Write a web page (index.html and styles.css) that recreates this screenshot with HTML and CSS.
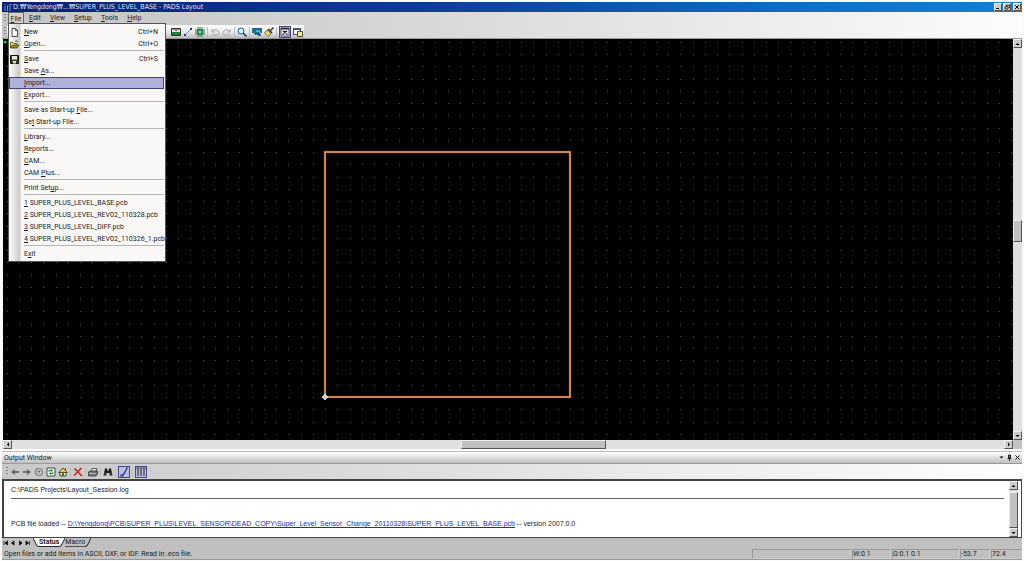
FILE: index.html
```html
<!DOCTYPE html>
<html lang="en">
<head>
<meta charset="utf-8">
<title>PADS Layout</title>
<link rel="stylesheet" href="styles.css">
</head>
<body>
<div class="app">
  <header class="titlebar">
    <svg class="logo" width="8" height="8" viewBox="0 0 8 8"><path d="M1 1v1M1 3v5M3.500 8V2.500h1M6 8V1.500h2" fill="none" stroke="#8c9cd8" stroke-width=".9"/></svg>
    <h1 class="title">D:₩Yengdong₩...₩SUPER_PLUS_LEVEL_BASE - PADS Layout</h1>
    <div class="winbtns">
      <button class="btn3d" aria-label="Minimize"><svg width="6" height="6" viewBox="0 0 6 6"><path d="M1 4.500h3" stroke="#000"/></svg></button>
      <button class="btn3d" aria-label="Restore"><svg width="6" height="6" viewBox="0 0 6 6"><path d="M2.500 2.500V1h3v2.500H4.500M1 2.700h3v2.300H1z" fill="none" stroke="#000" stroke-width=".7"/></svg></button>
      <button class="btn3d close" aria-label="Close"><svg width="6" height="6" viewBox="0 0 6 6"><path d="M1 1l4 4M5 1l-4 4" stroke="#000"/></svg></button>
    </div>
  </header>

  <div class="chrome">
    <nav class="menubar">
      <span class="grip"></span>
      <div class="menuwrap">
        <button class="menubtn open"><u>F</u>ile</button>
        <div class="menu" role="menu">
          <button class="item" role="menuitem"><svg class="mi" width="9" height="9" viewBox="0 0 9 9"><path d="M2 .5h3.500l2 2v6H2z" fill="#fff" stroke="#222" stroke-width=".8"/><path d="M5.500.5v2h2" fill="none" stroke="#222" stroke-width=".7"/></svg><span><u>N</u>ew</span><kbd>Ctrl+N</kbd></button>
          <button class="item" role="menuitem"><svg class="mi" width="9" height="9" viewBox="0 0 9 9"><path d="M.5 8V2.500h2.500l1 1h3V5" fill="#e8df6a" stroke="#554d10" stroke-width=".8"/><path d="M.5 8L2.500 5H9L7 8z" fill="#9a9114" stroke="#333008" stroke-width=".7"/><path d="M5 1.500q1.500-1.500 3 .5" fill="none" stroke="#222" stroke-width=".7"/></svg><span><u>O</u>pen...</span><kbd>Ctrl+O</kbd></button>
          <hr>
          <button class="item" role="menuitem"><svg class="mi" width="9" height="9" viewBox="0 0 9 9"><path d="M.5.5h8v8h-8z" fill="#3d461f" stroke="#151808"/><path d="M2 1h5v3.500H2z" fill="#e8e8e4"/><path d="M3 6h3v2.500H3z" fill="#ddd"/></svg><span><u>S</u>ave</span><kbd>Ctrl+S</kbd></button>
          <button class="item" role="menuitem"><span>Save <u>A</u>s...</span></button>
          <button class="item hot" role="menuitem"><span><u>I</u>mport...</span></button>
          <button class="item" role="menuitem"><span><u>E</u>xport...</span></button>
          <hr>
          <button class="item" role="menuitem"><span>Save as Start-up <u>F</u>ile...</span></button>
          <button class="item" role="menuitem"><span>Se<u>t</u> Start-up File...</span></button>
          <hr>
          <button class="item" role="menuitem"><span><u>L</u>ibrary...</span></button>
          <button class="item" role="menuitem"><span><u>R</u>eports...</span></button>
          <button class="item" role="menuitem"><span><u>C</u>AM...</span></button>
          <button class="item" role="menuitem"><span>CAM <u>P</u>lus...</span></button>
          <hr>
          <button class="item" role="menuitem"><span>Print Set<u>u</u>p...</span></button>
          <hr>
          <button class="item" role="menuitem"><span><u>1</u> SUPER_PLUS_LEVEL_BASE.pcb</span></button>
          <button class="item" role="menuitem"><span><u>2</u> SUPER_PLUS_LEVEL_REV02_110328.pcb</span></button>
          <button class="item" role="menuitem"><span><u>3</u> SUPER_PLUS_LEVEL_DIFF.pcb</span></button>
          <button class="item" role="menuitem"><span><u>4</u> SUPER_PLUS_LEVEL_REV02_110326_1.pcb</span></button>
          <hr>
          <button class="item" role="menuitem"><span>E<u>x</u>it</span></button>
        </div>
      </div>
      <button class="menubtn"><u>E</u>dit</button>
      <button class="menubtn"><u>V</u>iew</button>
      <button class="menubtn"><u>S</u>etup</button>
      <button class="menubtn"><u>T</u>ools</button>
      <button class="menubtn"><u>H</u>elp</button>
    </nav>
    <div class="toolbar">
      <span class="grip"></span>
      <div class="tools">
        <button class="tool" aria-label="Board"><svg width="10" height="10" viewBox="0 0 10 10"><path d="M.5 1.500h9v7h-9z" fill="#e9ece4" stroke="#333"/><path d="M1 5h8v3H1z" fill="#188038"/><path d="M1 1h8v1.500H1z" fill="#333"/><path d="M4 3.500h2" stroke="#d04030"/></svg></button>
        <button class="tool" aria-label="Route"><svg width="10" height="10" viewBox="0 0 10 10"><path d="M2 8l6-6" stroke="#6c86e6"/><path d="M1 7h2v2H1zM7 1h2v2H7z" fill="#1230c8"/></svg></button>
        <button class="tool" aria-label="Component"><svg width="10" height="10" viewBox="0 0 10 10"><path d="M3 0v10M5 0v10M7 0v10M0 3h10M0 5h10M0 7h10" stroke="#285a3c" stroke-width=".9"/><path d="M2 2h6v6H2z" fill="#2e8b57"/><path d="M4 4h2v2H4z" fill="#a8dcb8"/></svg></button>
        <span class="sep"></span>
        <button class="tool" aria-label="Undo"><svg width="10" height="10" viewBox="0 0 10 10"><path d="M2 2v3h3M2 5q3-4 6-1t-1 4H2" fill="none" stroke="#a5a5a5"/></svg></button>
        <button class="tool" aria-label="Redo"><svg width="10" height="10" viewBox="0 0 10 10"><path d="M8 2v3H5M8 5Q5 1 2 4t1 4h5" fill="none" stroke="#a5a5a5"/></svg></button>
        <span class="sep"></span>
        <button class="tool" aria-label="Zoom"><svg width="10" height="10" viewBox="0 0 10 10"><circle cx="4" cy="4" r="3" fill="#d7f2f5" stroke="#20588c"/><path d="M6 6l3.500 3.500" stroke="#183c88" stroke-width="1.600"/></svg></button>
        <span class="sep"></span>
        <button class="tool" aria-label="View board"><svg width="10" height="10" viewBox="0 0 10 10"><path d="M0 1h10v5H0z" fill="#157884"/><path d="M1 1h8v1H1z" fill="#2856a8"/><path d="M2 6h6l1 3H7L5 7.500 3 8z" fill="#1b4a90"/><path d="M4 4h3l1 2" fill="none" stroke="#a5dce8"/></svg></button>
        <button class="tool" aria-label="Redraw"><svg width="10" height="10" viewBox="0 0 10 10"><path d="M6 3l3-3 1 1-3 3z" fill="#333"/><path d="M3 3l4 4-3 2.500L.5 6z" fill="#e8dd70" stroke="#605a20" stroke-width=".8"/><path d="M4 2l4 4" stroke="#222" stroke-width="1.400"/></svg></button>
        <span class="sep"></span>
        <button class="tool on" aria-label="Output window"><svg width="10" height="10" viewBox="0 0 10 10"><path d="M1 1h8v8H1z" fill="#dddcec" stroke="#444" stroke-width=".8"/><path d="M1 1h8v1.500H1z" fill="#333"/><path d="M3 4.500h4M6 4L2.500 8M5 5.500L7.500 8" fill="none" stroke="#111"/></svg></button>
        <button class="tool" aria-label="Project explorer"><svg width="10" height="10" viewBox="0 0 10 10"><path d="M.5 1.500h7v6h-7z" fill="#fff" stroke="#45506c"/><path d="M0 1h8v2H0z" fill="#455484"/><path d="M4.500 4.500h5v5h-5z" fill="#f0e7a0" stroke="#55502c"/></svg></button>
      </div>
    </div>
  </div>

  <main class="workspace">
    <svg class="board" role="img" aria-label="Board outline">
      <defs>
        <pattern id="grid" x="28" y="15" width="49" height="49" patternUnits="userSpaceOnUse">
          <path d="M0 0h1v1H0zM12 0h1v1h-1zM25 0h1v1h-1zM37 0h1v1h-1zM0 12h1v1H0zM12 12h1v1h-1zM25 12h1v1h-1zM37 12h1v1h-1zM0 25h1v1H0zM12 25h1v1h-1zM25 25h1v1h-1zM37 25h1v1h-1zM0 37h1v1H0zM12 37h1v1h-1zM25 37h1v1h-1zM37 37h1v1h-1z" fill="#4c4c4c"/>
        </pattern>
      </defs>
      <rect width="100%" height="100%" fill="#000"/>
      <rect width="100%" height="100%" fill="url(#grid)"/>
      <rect x="322" y="113" width="245" height="245" fill="none" stroke="#74401c" stroke-width="2.400"/>
      <rect x="322" y="113" width="245" height="245" fill="none" stroke="#f2a368" stroke-width="1.400"/>
      <path d="M322 355l1 2 2 1-2 1-1 2-1-2-2-1 2-1z" fill="#fff" stroke="#dfe8ee"/><path d="M320 356l4 4M324 356l-4 4" stroke="#9cb4c4" stroke-width=".8"/>
      <circle cx="2" cy="3" r="1.500" fill="#18d818"/>
    </svg>
    <div class="vscroll">
      <button class="btn3d arrow" aria-label="Up"><svg width="5" height="4" viewBox="0 0 5 4"><path d="M.5 3h4L2.500 1z"/></svg></button>
      <span class="track"></span><span class="thumb board-thumb"></span><span class="track"></span>
      <button class="btn3d arrow" aria-label="Down"><svg width="5" height="4" viewBox="0 0 5 4"><path d="M.5 1h4l-2 2z"/></svg></button>
    </div>
  </main>
  <div class="hscroll">
    <button class="btn3d arrow" aria-label="Left"><svg width="4" height="5" viewBox="0 0 4 5"><path d="M3 .5v4l-2-2z"/></svg></button>
    <span class="left-track"></span><span class="thumb"></span><span class="right-track"></span>
    <button class="btn3d arrow" aria-label="Right"><svg width="4" height="5" viewBox="0 0 4 5"><path d="M1 .5v4l2-2z"/></svg></button>
    <span class="corner"></span>
  </div>

  <section class="output">
    <div class="outhead">
      <h2>Output Window</h2>
      <button class="mini" aria-label="Options"><svg width="7" height="7" viewBox="0 0 7 7"><path d="M1.500 2.500h4l-2 2z"/></svg></button>
      <button class="mini" aria-label="Pin"><svg width="7" height="7" viewBox="0 0 7 7"><path d="M2.500 1h2v3h-2zM1.500 4.500h4M3.500 5v2" fill="#777" stroke="#000" stroke-width=".8"/></svg></button>
      <button class="mini" aria-label="Close output"><svg width="7" height="7" viewBox="0 0 7 7"><path d="M1.500 1.500l4 4M5.500 1.500l-4 4" stroke="#000"/></svg></button>
    </div>
    <div class="outtools">
      <span class="grip"></span>
      <button class="tool" aria-label="Back"><svg width="10" height="10" viewBox="0 0 10 10"><path d="M9 5H3" stroke="#666" stroke-width="1.800"/><path d="M1 5l4-3v6z" fill="#666"/></svg></button>
      <button class="tool" aria-label="Forward"><svg width="10" height="10" viewBox="0 0 10 10"><path d="M1 5h6" stroke="#666" stroke-width="1.800"/><path d="M9 5L5 2v6z" fill="#666"/></svg></button>
      <button class="tool" aria-label="Stop"><svg width="10" height="10" viewBox="0 0 10 10"><circle cx="5" cy="5" r="3.500" fill="#ddd" stroke="#777" stroke-width="1.200"/><path d="M3.500 3.500l3 3M6.500 3.500l-3 3" stroke="#666" stroke-width="1.200"/></svg></button>
      <button class="tool" aria-label="Refresh"><svg width="10" height="10" viewBox="0 0 10 10"><path d="M1 1h8v8H1z" fill="#f6fff6" stroke="#3e4c3e"/><path d="M3 5V3.500h3.500M7 5v1.500H3.500" fill="none" stroke="#159035"/><path d="M5 2l2 1.500L5 5zM5 5L3 6.500 5 8z" fill="#159035"/></svg></button>
      <button class="tool" aria-label="Home"><svg width="10" height="10" viewBox="0 0 10 10"><path d="M2 5h6v4H2z" fill="#fff6be" stroke="#444"/><path d="M.5 5.500L5 1l4.500 4.500z" fill="#d9c554" stroke="#494014" stroke-width=".8"/><path d="M7 1h1v2H7z" fill="#b22"/><path d="M4 6h2v3H4z" fill="#456f38"/></svg></button>
      <span class="sep"></span>
      <button class="tool" aria-label="Delete"><svg width="10" height="10" viewBox="0 0 10 10"><path d="M1.500 1.500L9 9M8.500 1L1 8.500" stroke="#c32a24" stroke-width="1.700"/></svg></button>
      <span class="sep"></span>
      <button class="tool" aria-label="Print"><svg width="10" height="10" viewBox="0 0 10 10"><path d="M3 4.500l1-3h5l-1 3" fill="#ddd" stroke="#444" stroke-width=".8"/><path d="M.5 5l1.500-1h7.500v3L8 9H.5z" fill="#777" stroke="#333" stroke-width=".8"/><path d="M1 6.500h6.500" stroke="#bbb" stroke-width=".8"/></svg></button>
      <span class="sep"></span>
      <button class="tool" aria-label="Find"><svg width="10" height="10" viewBox="0 0 10 10"><path d="M2 1.500h2L4.500 4h1L6 1.500h2L9.500 8.500h-3V6h-3v2.500h-3z" fill="#191919"/><path d="M2 5v3M8 5v3" stroke="#777" stroke-width=".6"/></svg></button>
      <span class="sep"></span>
      <button class="tool on" aria-label="Log"><svg width="10" height="10" viewBox="0 0 10 10"><path d="M8 1L6 5Q5 8 1.500 8.500" fill="none" stroke="#2345b4" stroke-width="1.400"/><path d="M7 1h2M1 9h4" stroke="#333" stroke-width=".8"/></svg></button>
      <span class="sep"></span>
      <button class="tool on" aria-label="Columns"><svg width="10" height="10" viewBox="0 0 10 10"><path d="M0 1h10" stroke="#555"/><path d="M2 1v8M5 1v8M8 1v8" stroke="#555" stroke-width="1.500"/></svg></button>
    </div>
    <div class="logbox">
      <div class="log">
        <p class="path">C:\PADS Projects\Layout_Session.log</p>
        <p>PCB file loaded -- <a href="#">D:\Yengdong\PCB\SUPER_PLUS\LEVEL_SENSOR\DEAD_COPY\Super_Level_Sensor_Change_20110328\SUPER_PLUS_LEVEL_BASE.pcb</a> -- version 2007.0.0</p>
      </div>
      <div class="vscroll">
        <button class="btn3d arrow" aria-label="Scroll up"><svg width="5" height="4" viewBox="0 0 5 4"><path d="M.5 3h4L2.500 1z"/></svg></button>
        <span class="gap"></span><span class="thumb log-thumb"></span>
        <button class="btn3d arrow" aria-label="Scroll down"><svg width="5" height="4" viewBox="0 0 5 4"><path d="M.5 1h4l-2 2z"/></svg></button>
      </div>
    </div>
    <div class="tabs">
      <svg class="nav" width="30" height="9" viewBox="0 0 30 9"><path d="M2 3v4M5.500 3v4L3 5zM12 3v4L9.500 5zM17.500 3v4l2.500-2zM24 3v4l2.500-2zM27.500 3v4" stroke="#000" stroke-width=".7"/></svg>
      <button class="tab active"><svg width="6" height="9" viewBox="0 0 6 9"><path d="M0 0l5 9h1V0z" fill="#fff"/><path d="M0 0l4 8 2 .5" fill="none" stroke="#222"/></svg><span>Status</span><svg width="6" height="9" viewBox="0 0 6 9"><path d="M0 0h6L1 9H0z" fill="#fff"/><path d="M6 0L2 8l-2 .5" fill="none" stroke="#222"/></svg></button>
      <button class="tab"><span>Macro</span><svg width="6" height="9" viewBox="0 0 6 9"><path d="M6 0L2 8l-2 .5" fill="none" stroke="#222"/></svg></button>
    </div>
  </section>

  <footer class="status">
    <span class="hint">Open files or add items in ASCII, DXF, or IDF. Read in .eco file.</span>
    <span class="cell c-blank"></span>
    <span class="cell c-w">W:0.1</span>
    <span class="cell c-g">G:0.1 0.1</span>
    <span class="cell c-x">-53.7</span>
    <span class="cell c-y">72.4</span>
  </footer>
</div>
</body>
</html>
```
FILE: styles.css
```css
* { box-sizing: border-box; }
body {
  margin: 0;
  background: #fbfbfb;
  font: 7px/10px Roboto, "Noto Sans", sans-serif;
  color: #1c1c1c;
}
button { font: inherit; color: inherit; margin: 0; padding: 0; border: 0; background: none; }
h1, h2, p, hr { margin: 0; font: inherit; }
svg { display: block; flex: none; }
u { text-decoration-thickness: 1px; text-underline-offset: 1px; }

.app { display: flex; flex-direction: column; height: 100vh; padding: 2px 2px 1px; }

.titlebar {
  display: flex; align-items: center; gap: 1px; flex: none; height: 10px; padding: 0 1px 0 2px;
  background: linear-gradient(90deg, #0a2078, #0b3c94 40%, #0f70c8 80%, #1580d4);
  color: #dce4f8;
}
.title { flex: 1; font: 7px/10px "DejaVu Sans Condensed", "Noto Sans CJK KR", sans-serif; white-space: nowrap; }
.winbtns { display: flex; gap: 1px; }
.winbtns .close { margin-left: 1px; }
.btn3d {
  display: flex; align-items: center; justify-content: center; flex: none; width: 8px; height: 8px;
  background: #ccc; border: 1px solid; border-color: #f2f2f2 #555 #555 #f2f2f2;
}

.chrome { flex: none; background: linear-gradient(90deg, #c4c4c4, #d4d4d4 35%, #fcfcfc); }
.menubar { display: flex; height: 13px; align-items: stretch; padding-left: 2px; }
.grip { flex: none; width: 2px; height: 9px; margin: 2px 1px 0 0; background: repeating-linear-gradient(#888 0 1px, transparent 1px 3px); }
.menuwrap { position: relative; margin-left: 1px; margin-right: 1px; }
.menubtn { height: 12px; padding: 0 4px; line-height: 12px; }
.menubtn + .menubtn { padding-left: 5px; }
.menubtn.open { width: 16px; padding: 0; border: 1px solid #666; border-bottom: 0; background: #d2d2d2; }
.menu {
  position: absolute; z-index: 2; top: 11px; left: 0; width: 158px; padding: 2px 1px 1px 0;
  border: 1px solid #555;
  background: linear-gradient(90deg, #fdfdfd, #c9c9c9 11px, #f8f7f6 12px);
}
.item { display: flex; align-items: center; width: 100%; height: 12px; padding: 0 5px 0 14px; border: 1px solid transparent; white-space: nowrap; text-align: left; }
.item .mi { width: 9px; margin: 0 5px 0 -14px; }
.item kbd { margin-left: auto; font: inherit; }
.item.hot { background: #b0b0dc; border-color: #43437c; }
.menu hr { height: 3px; margin-left: 15px; border: 0; border-top: 1px solid #b5b5b5; }

.toolbar { display: flex; height: 14px; padding-left: 2px; border-bottom: 1px solid #999; }
.tools {
  display: flex; align-items: center; gap: 2px; padding: 0 1px 0 164px;
  background: linear-gradient(#fff, #e5e5e5 60%, #bbb);
}
.tool { display: flex; flex: none; width: 10px; height: 10px; align-items: center; justify-content: center; }
.tool.on { width: 12px; height: 12px; background: #bfbfe2; border: 1px solid #44448a; }
.sep { flex: none; width: 1px; height: 10px; background: #bbb; }

.workspace { display: flex; flex: 1; min-height: 0; padding-left: 1px; }
.board { flex: 1; min-width: 0; height: 100%; }
.vscroll { display: flex; flex-direction: column; flex: none; width: 9px; background: #e0e0e0; }
.vscroll .arrow, .hscroll .arrow { width: 9px; height: 9px; }
.track { flex: 172; }
.track + .thumb + .track { flex: 189; }
.thumb { flex: none; background: #c0c0c0; border: 1px solid; border-color: #eee #555 #555 #eee; }
.board-thumb { height: 22px; }
.hscroll { display: flex; flex: none; height: 9px; padding-left: 1px; background: #e0e0e0; }
.hscroll .thumb { width: 145px; }
.left-track { flex: 449; }
.right-track { flex: 398; }
.corner { width: 9px; background: #c4c4c4; }

.output { flex: none; margin-top: 2px; background: #c0c0c0; border-top: 1px solid #bbb; }
.outhead { display: flex; align-items: center; gap: 1px; height: 12px; padding: 0 1px 0 2px; border-bottom: 1px solid #999; background: linear-gradient(#fff, #bfbfbf); }
.outhead h2 { flex: 1; }
.mini { width: 7px; height: 7px; }
.outtools { display: flex; align-items: center; gap: 2px; height: 15px; padding-left: 4px; background: linear-gradient(90deg, #c8c8c8, #fefefe); }
.outtools .grip { margin: 0; }
.logbox { display: flex; height: 59px; padding-right: 3px; border: 1px solid #444; border-width: 2px 1px 1px 2px; background: #fff; }
.log { flex: 1; padding: 4px 5px 0 7px; font: 7px/10px "Liberation Sans", Arial, sans-serif; }
.path { height: 14px; margin-bottom: 20px; border-bottom: 1px solid #666; }
.log a { color: #2828b4; }
.gap { height: 2px; }
.log-thumb { flex: 1; }

.tabs { display: flex; height: 10px; }
.nav { margin-right: 1px; }
.tab { display: flex; line-height: 9px; height: 9px; }
.tab.active { font-weight: bold; }
.tab.active span { background: #fff; border-bottom: 1px solid #222; }
.tab span { height: 9px; padding: 0; border-bottom: 1px solid #555; }

.status { display: flex; flex: none; height: 12px; gap: 1px; background: #c0c0c0; border-bottom: 1px solid #999; }
.hint { flex: 1; padding-left: 2px; line-height: 12px; white-space: nowrap; }
.cell { flex: none; height: 10px; margin-top: 1px; line-height: 9px; border: 1px solid #999; border-color: #999 #ccc #ccc #999; }
.c-blank { width: 99px; }
.c-w { width: 39px; }
.c-g { width: 67px; }
.c-x { width: 30px; }
.c-y { width: 31px; }
```
